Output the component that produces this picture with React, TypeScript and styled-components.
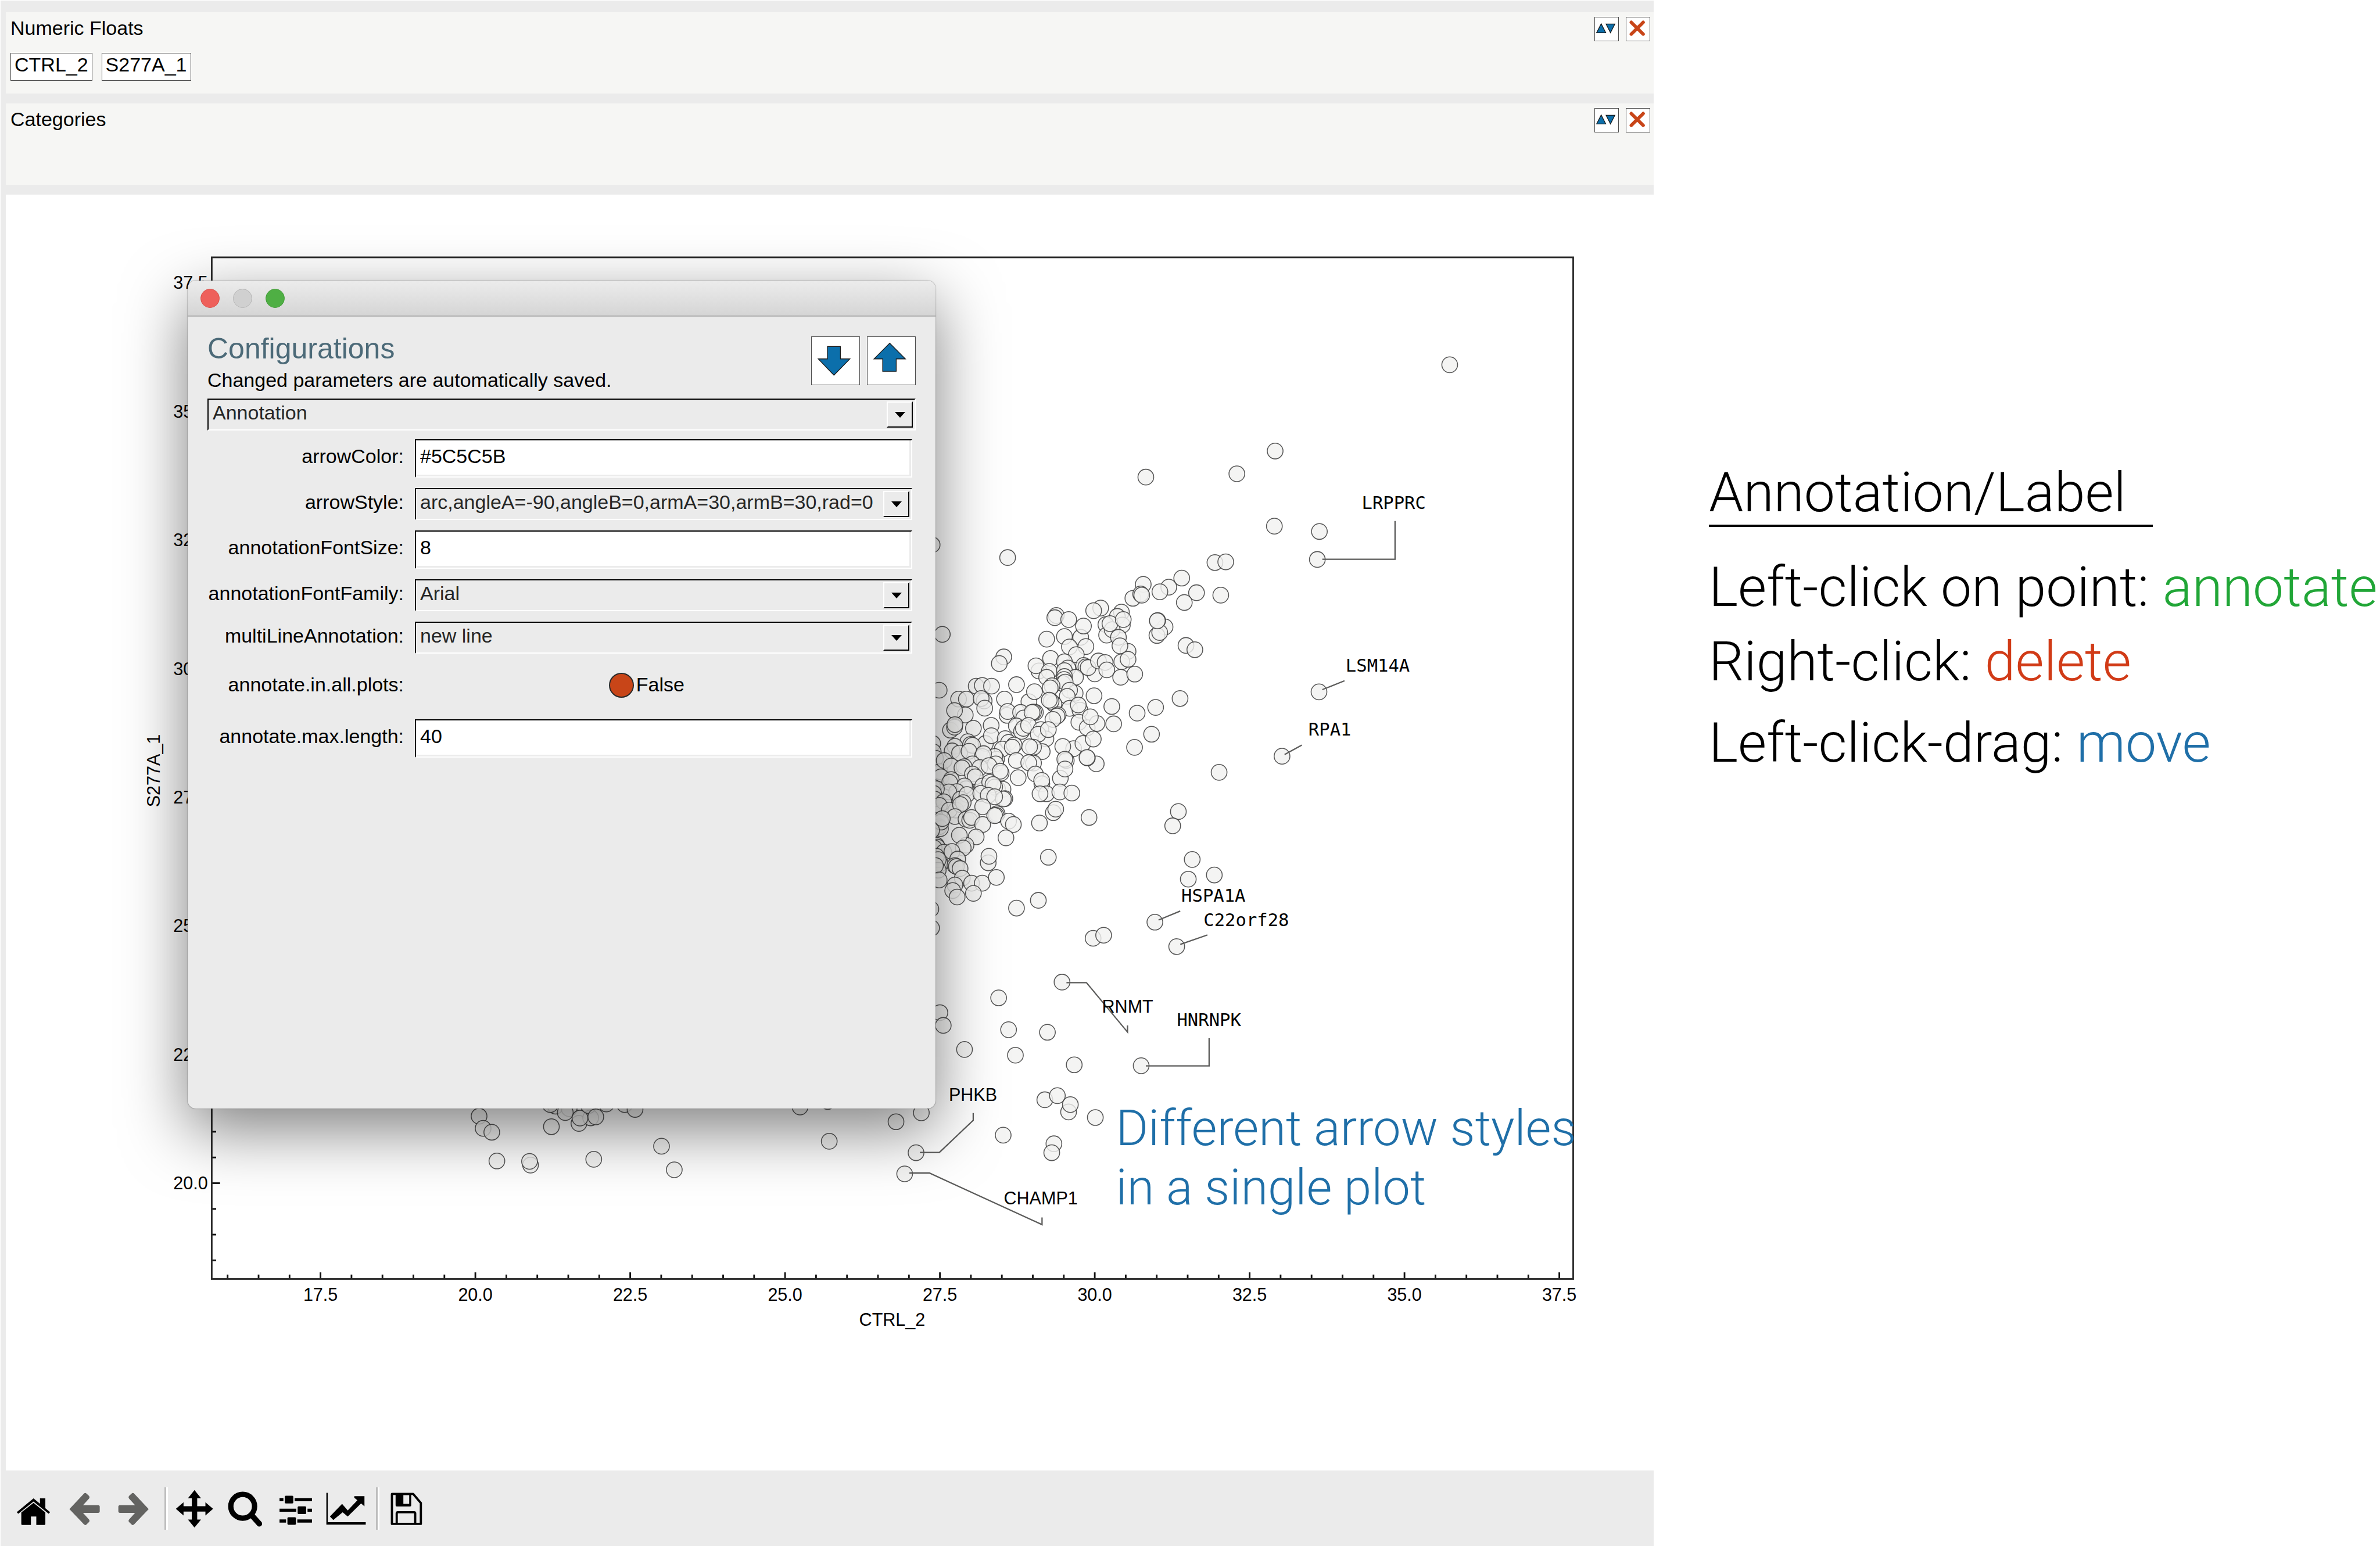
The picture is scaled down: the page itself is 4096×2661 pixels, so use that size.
import React, { useId, useState } from "react";
import styled, { createGlobalStyle } from "styled-components";

const SANS = '"Liberation Sans", Arial, sans-serif';
const MONO = '"DejaVu Sans Mono", monospace';
const LIGHT = 'Roboto, sans-serif';

const GlobalStyle = createGlobalStyle`
  *, *::before, *::after { box-sizing: border-box; }
  body { margin: 0; background: #fff; color: #000; font-family: ${SANS}; }
  button, input, select { font: inherit; color: inherit; margin: 0; padding: 0; border-radius: 0; }
`;

/* ---------- page ---------- */

const Page = styled.div`
  display: grid;
  grid-template-columns: minmax(0, 2846fr) minmax(0, 1250fr);
  min-height: 100vh;
  overflow: hidden;
`;

const Workspace = styled.main`
  display: flex;
  flex-direction: column;
  min-width: 0;
  background: #ebebeb;
  border: 0 solid #fff;
  border-width: 1px 0 0 1px;
  padding: 20px 0 0 9px;
`;

/* ---------- receiver boxes above the plot ---------- */

const DropBox = styled.section`
  background: #f6f6f4;
  min-height: 140px;
  margin-bottom: 17px;
  padding: 8px 6px 0 8px;
  font-size: 34px;
`;

const DropHeader = styled.header`
  display: flex;
  align-items: flex-start;
  gap: 12px;
`;

const DropTitle = styled.h2`
  flex: 1;
  margin: 0;
  font-size: 34px;
  font-weight: 400;
  line-height: 38px;
`;

const SmallButton = styled.button`
  display: flex;
  width: 42px;
  height: 42px;
  background: #fff;
  border: 1px solid #4d4d4d;
  svg { display: block; width: 100%; height: 100%; }
`;

const Chips = styled.div`
  display: flex;
  gap: 16px;
  margin-top: 20px;
`;

const Chip = styled.button`
  height: 48px;
  padding: 0 6px 8px;
  line-height: 38px;
  background: #fff;
  border: 1px solid #4d4d4d;
`;

/* ---------- plot ---------- */

const PlotArea = styled.div`
  position: relative;
  flex: 1;
  background: #fff;
`;

const Plot = styled.svg`
  display: block;
  width: 100%;
  height: auto;
`;

const AxisText = styled.text`
  font-family: ${SANS};
  font-size: 32px;
`;

const GeneText = styled.text<{ $mono?: boolean }>`
  font-family: ${(p) => (p.$mono ? MONO : SANS)};
  font-size: 32px;
`;

const NoteText = styled.text`
  font-family: ${LIGHT};
  font-weight: 300;
  font-size: 89px;
  fill: #1f6fa8;
`;

/* ---------- configuration window ---------- */

const Dialog = styled.div`
  position: absolute;
  left: 313px;
  top: 148px;
  width: 1287px;
  height: 1425px;
  background: #ebebeb;
  border-radius: 14px;
  box-shadow: 0 36px 110px rgba(0, 0, 0, 0.5), 0 0 2px rgba(0, 0, 0, 0.6);
  font-size: 34px;
`;

const TitleBar = styled.div`
  display: flex;
  align-items: center;
  gap: 23px;
  height: 62px;
  padding: 0 22px;
  border-radius: 14px 14px 0 0;
  background: linear-gradient(#ececec, #d5d5d5);
  border-bottom: 2px solid #b1b1b1;
`;

const Light = styled.button<{ $fill: string; $edge: string }>`
  width: 33px;
  height: 33px;
  && { border-radius: 50%; }
  background: ${(p) => p.$fill};
  border: 1px solid ${(p) => p.$edge};
`;

const DialogBody = styled.form`
  padding: 30px 34px 0;
`;

const DialogHead = styled.div`
  display: flex;
  gap: 12px;
  margin-bottom: 11px;
`;

const DialogTitles = styled.div`
  flex: 1;
`;

const DialogTitle = styled.h1`
  margin: 0 0 8px;
  font-size: 50px;
  line-height: 50px;
  font-weight: 400;
  color: #4c6a78;
`;

const DialogHint = styled.p`
  margin: 0;
  font-size: 34px;
  line-height: 42px;
`;

const ArrowButton = styled.button`
  width: 84px;
  height: 84px;
  margin-top: 4px;
  background: #fff;
  border: 1px solid #4d4d4d;
  svg { display: block; width: 100%; height: 100%; }
`;

const Fields = styled.div`
  display: grid;
  grid-template-columns: 338px 1fr;
  column-gap: 19px;
  row-gap: 18px;
  align-items: center;
  padding: 15px 6px 0 0;
`;

const FieldLabel = styled.label`
  text-align: right;
  padding-bottom: 8px;
  line-height: 40px;
  white-space: nowrap;
`;

const TextField = styled.input`
  width: 100%;
  height: 66px;
  && { padding: 0 8px 8px 7px; }
  background: #fff;
  border: 2px solid;
  border-color: #000 #fff #fff #000;
  box-shadow: inset -3px -3px 0 #ebebeb;
  outline: none;
`;

const SelectBox = styled.div`
  position: relative;
`;

const SelectField = styled.select`
  display: block;
  appearance: none;
  width: 100%;
  height: 55px;
  && { padding: 0 50px 8px 7px; color: #262626; }
  background: #ebebeb;
  border: 2px solid;
  border-color: #000 #fff #fff #000;
  outline: none;
`;

const SelectArrow = styled.span`
  position: absolute;
  top: 5px;
  right: 5px;
  width: 45px;
  height: 45px;
  display: grid;
  place-items: center;
  pointer-events: none;
  border: 2px solid;
  border-color: #fff #000 #000 #fff;
  &::after {
    content: "";
    border: 9px solid transparent;
    border-top: 10px solid #000;
    border-bottom: 0;
  }
`;

const ToggleRow = styled.div`
  display: flex;
  align-items: center;
  gap: 4px;
  height: 77px;
  padding: 0 0 4px 39%;
`;

const Toggle = styled.input`
  appearance: none;
  width: 43px;
  height: 43px;
  && { border-radius: 50%; }
  border: 2px solid #2a2a2a;
  background: #c84518;
  &:checked { background: #4faf44; }
`;

const ToggleText = styled.span`
  padding-bottom: 4px;
  line-height: 40px;
`;

/* ---------- toolbar ---------- */

const Toolbar = styled.div`
  display: flex;
  align-items: center;
  height: 130px;
  padding-left: 4px;
`;

const ToolButton = styled.button`
  width: 87px;
  height: 72px;
  background: none;
  border: 0;
  svg { display: block; width: 100%; height: 100%; }
`;

const Separator = styled.span`
  width: 6px;
  height: 73px;
  margin: 0 2px 0 8px;
  border-left: 3px solid #bdbdbd;
  border-right: 3px solid #fff;
`;

/* ---------- help text ---------- */

const Help = styled.aside`
  min-width: 0;
  padding: 792px 0 0 95px;
  font-family: ${LIGHT};
  font-weight: 300;
  font-size: 95px;
  white-space: nowrap;
`;

const HelpTitle = styled.h2`
  width: 764px;
  margin: 0 0 40px;
  font-size: 95px;
  font-weight: 300;
  line-height: 111px;
  border-bottom: 4px solid #000;
`;

const HelpGroup = styled.div`
  margin-bottom: 12px;
`;

const HelpLine = styled.p`
  margin: 0;
  line-height: 128px;
`;

const Action = styled.span<{ $color: string }>`
  color: ${(p) => p.$color};
`;

/* ---------- data ---------- */

type Pair = [number, number];
interface Batch { x: number; y: number; step: number; at: Pair[] }

const BATCHES: Batch[] = [
  { x: 0, y: 0, step: 1, at: [
    [2611.5,657.6],[2297,813],[2064,860],[2228,854],[2295.6,948.4],[2376.7,958],[2373,1008.4],[1815,1005],[1679,982],
    [2188.5,1014],[2208,1012.7],[2199,1072.7],[2376,1247],[2309.4,1363],[2196,1392],[2122.6,1462.7],[2112.4,1488.4],
    [2147.6,1549],[2187.4,1577],[2140.5,1584.5],[2080.3,1662],[2119.6,1706],[1969,1691],[1988,1685.5],[1678,1672.5],
    [1913,1770],[1798.8,1798.4],[1693,1825],[1699,1848],[1816.7,1855.8],[1886.7,1860.4],[1737.3,1891.4],[1829,1901.7],
    [1935,1919],[2055.6,1920.7],[1882,1982],[1904.6,1974.6],[1924.8,2004],[1928,1990.7],[1973,2014],[1807,2045.8],
    [1898.4,2061.3],[1894.5,2077.4],[1659.5,2005.6],[1650,2077.4],
    [862.7,2011.6],[870,2033.5],[885.6,2040.5],[993,2030.5],[1000.4,1993.5],[991,1990.6],[1025,1998],[1018,2005],
    [1042.6,2024.6],[1063.8,2014.6],[1044.5,2015],[1060,1992.4],[1073,2012.8],[1092,1989.5],[1125,1990.6],[1143.7,1999.4],
    [1441,1995],[1490.8,1985],[1613.9,2021.6],[1493.6,2056.8],[894.8,2092.3],[955.4,2099.7],[953.6,2093],[1069.3,2089.3],
    [1191.4,2065.7],[1214.4,2108.2],[1629.5,2115.6],
  ] },
  { x: 1680, y: 1120, step: 1 / 3, at: [
    [52,70],[35,372],[384,192],[360,228],[453,342],[235,350],[268,346],[318,350],[388,420],[140,420],[182,420],[278,430],
    [262,417],[176,506],[118,482],[281,469],[402,508],[405,487],[96,588],[118,572],[120,558],[220,578],[316,562],[190,650],
    [285,660],[317,618],[520,434],[550,380],[616,96],[712,82],[800,86],[739,138],[828,136],[776,180],[637,200],[574,268],
    [558,240],[712,218],[630,270],[616,302],[730,252],[712,266],[816,238],[828,246],[772,302],[712,298],[710,314],[704,336],
    [716,328],[876,284],[840,250],[645,348],[635,360],[770,388],[740,372],[727,405],[872,402],[655,446],[640,432],[630,426],
    [740,470],[796,480],[787,452],[678,505],[672,512],[650,530],[475,492],[492,522],[555,492],[545,490],[537,492],[452,565],
    [480,595],[490,578],[518,562],[585,585],[612,635],[570,610],[625,585],[790,545],[835,575],[888,552],[852,516],[762,688],
    [812,660],[868,636],[703,676],[722,752],[714,745],[690,848],[715,798],[884,770],[836,738],[834,736],[592,704],[545,680],
    [524,678],[392,634],[410,654],[376,690],[440,668],[430,680],[452,752],[462,845],[545,766],[519,764],[555,825],[590,878],
    [589,860],[615,932],[580,932],[687,922],[752,928],[652,1034],[665,1015],[577,1090],[845,1060],[625,1275],[571,1508],
    [453,1550],[0,660],[3,705],[15,740],[120,675],[105,700],[205,665],[215,670],[145,712],[196,702],[345,745],[335,730],
    [268,730],[275,715],[40,812],[62,752],[100,782],[215,770],[170,785],[158,792],[255,790],[340,770],[304,780],[215,825],
    [230,840],[370,820],[365,810],[45,840],[100,855],[92,870],[180,905],[172,890],[270,890],[350,905],[380,908],[308,870],
    [335,895],[326,882],[130,920],[87,922],[150,960],[185,936],[260,930],[300,940],[390,958],[382,960],[335,948],[0,895],
    [20,905],[5,930],[10,960],[60,975],[36,995],[125,1020],[90,1020],[165,980],[150,990],[270,1002],[120,1055],[35,1110],
    [42,1120],[45,1085],[52,1066],[180,1070],[200,1075],[210,1060],[270,1098],[348,1040],[343,1048],[335,1050],[410,1080],
    [436,1098],[396,1170],[-6,1130],[235,1165],[180,1210],[144,1156],[165,1225],[20,1210],[25,1220],[8,1225],[60,1248],
    [104,1244],[40,1310],[20,1270],[30,1288],[135,1285],[120,1320],[128,1325],[148,1336],[30,1345],[15,1320],[35,1398],
    [160,1388],[120,1425],[210,1415],[268,1415],[344,1384],[300,1305],[304,1270],[220,1470],[108,1455],[132,1490],[-10,1555],
  ] },
  { x: 1840, y: 960, step: 1 / 3, at: [
    [188,448],[180,460],[255,470],[335,505],[428,408],[390,422],[866,246],[796,295],[748,320],[658,280],[602,355],[644,332],
    [650,338],[946,325],[880,378],[540,430],[518,453],[545,500],[456,497],[460,554],[490,525],[478,492],[550,470],[524,566],
    [576,642],[532,612],[542,698],[576,685],[776,510],[732,556],[747,540],[736,475],[734,477],[889,610],[937,633],[416,694],
    [452,702],[461,742],[536,782],[612,765],[488,940],[498,1034],[625,976],[725,945],[857,897],[703,1090],[611,1161],
  ] },
];

const GENES: { name: string; x: number; y: number; mono?: boolean; line: string }[] = [
  { name: "LRPPRC", x: 2453, y: 917, mono: true, line: "2382,1008 2513,1008 2513,939" },
  { name: "LSM14A", x: 2424, y: 1210, mono: true, line: "2382,1243 2422,1227" },
  { name: "RPA1", x: 2357, y: 1326, mono: true, line: "2314,1360 2345,1343" },
  { name: "HSPA1A", x: 2128, y: 1625, mono: true, line: "2087,1658 2126,1642" },
  { name: "C22orf28", x: 2168, y: 1669, mono: true, line: "2126,1702 2175,1685" },
  { name: "RNMT", x: 1985, y: 1825, line: "1921,1771 1957,1771 2031,1860 2031,1848" },
  { name: "HNRNPK", x: 2120, y: 1849, mono: true, line: "2064,1921 2178,1921 2178,1871" },
  { name: "PHKB", x: 1709, y: 1984, line: "1657,2077 1692,2077 1753,2019 1753,2006" },
  { name: "CHAMP1", x: 1808, y: 2171, line: "1638,2114 1674,2114 1877,2207 1877,2194" },
];

const AXIS = { left: 381, right: 2834, top: 464, bottom: 2305 };
const xAt = (v: number) => 577 + (v - 17.5) * 111.6;
const yAt = (v: number) => 2132.3 - (v - 20) * 92.7;
const range = (from: number, to: number, step: number) =>
  Array.from({ length: Math.round((to - from) / step) + 1 }, (_, i) => from + i * step);

function Ticks() {
  return (
    <g stroke="#111" strokeWidth={3}>
      {range(16, 37.5, 0.5).map((v) => (
        <path key={`x${v}`} d={`M${xAt(v)} ${AXIS.bottom}v${v % 2.5 === 0 ? -12 : -8}`} />
      ))}
      {range(18.5, 37.5, 0.5).map((v) => (
        <path key={`y${v}`} d={`M${AXIS.left} ${yAt(v)}h${v % 2.5 === 0 ? 15 : 8}`} />
      ))}
    </g>
  );
}

function ScatterPlot() {
  const labels = range(17.5, 37.5, 2.5);
  return (
    <Plot viewBox="10 351 2969 2299" role="img" aria-label="Scatter plot of S277A_1 against CTRL_2">
      <Ticks />
      {labels.map((v) => (
        <AxisText key={v} x={xAt(v)} y={2344} textAnchor="middle">{v.toFixed(1)}</AxisText>
      ))}
      {labels.slice(1).map((v) => (
        <AxisText key={v} x={374} y={yAt(v) + 11} textAnchor="end">{v.toFixed(1)}</AxisText>
      ))}
      <AxisText x={1607} y={2389} textAnchor="middle">CTRL_2</AxisText>
      <AxisText transform="translate(287 1389) rotate(-90)" textAnchor="middle">S277A_1</AxisText>
      <g fill="#f1f1f0" fillOpacity={0.8} stroke="#3a3a3a" strokeOpacity={0.85} strokeWidth={1.6}>
        {BATCHES.map((b, i) =>
          b.at.map(([px, py], j) => (
            <circle key={`${i}-${j}`} cx={b.x + px * b.step} cy={b.y + py * b.step} r={14.2} />
          ))
        )}
      </g>
      {GENES.map((g) => (
        <g key={g.name}>
          <polyline points={g.line} fill="none" stroke="#5c5c5b" strokeWidth={2.4} />
          <GeneText $mono={g.mono} x={g.x} y={g.y}>{g.name}</GeneText>
        </g>
      ))}
      <rect
        x={AXIS.left} y={AXIS.top}
        width={AXIS.right - AXIS.left} height={AXIS.bottom - AXIS.top}
        fill="none" stroke="#2b2b2b" strokeWidth={3}
      />
      <NoteText x={2010} y={2064}>Different arrow styles</NoteText>
      <NoteText x={2010} y={2171}>in a single plot</NoteText>
    </Plot>
  );
}

/* ---------- parts ---------- */

function ReceiverBox({ title, items }: { title: string; items: string[] }) {
  return (
    <DropBox>
      <DropHeader>
        <DropTitle>{title}</DropTitle>
        <SmallButton type="button" aria-label={`Sort ${title}`}>
          <svg viewBox="0 0 44 44" fill="#0c6fab" stroke="#1a1a1a" strokeWidth="1.4">
            <path d="M11.7 12L20.4 29H3z" />
            <path d="M21 12.4H37.6L29.3 29z" />
          </svg>
        </SmallButton>
        <SmallButton type="button" aria-label={`Clear ${title}`}>
          <svg viewBox="0 0 44 44" stroke="#c84518" strokeWidth="6.4" strokeLinecap="round">
            <path d="M9.3 9.3L31.8 31.6M31.8 9.3L9.3 31.6" />
          </svg>
        </SmallButton>
      </DropHeader>
      {items.length > 0 && (
        <Chips>
          {items.map((item) => <Chip key={item} type="button">{item}</Chip>)}
        </Chips>
      )}
    </DropBox>
  );
}

function Dropdown({ id, label, options }: { id?: string; label?: string; options: string[] }) {
  return (
    <SelectBox>
      <SelectField id={id} aria-label={label} defaultValue={options[0]}>
        {options.map((o) => <option key={o}>{o}</option>)}
      </SelectField>
      <SelectArrow aria-hidden="true" />
    </SelectBox>
  );
}

interface Param { name: string; kind: "text" | "select" | "toggle"; value: string }

const PARAMS: Param[] = [
  { name: "arrowColor", kind: "text", value: "#5C5C5B" },
  { name: "arrowStyle", kind: "select", value: "arc,angleA=-90,angleB=0,armA=30,armB=30,rad=0" },
  { name: "annotationFontSize", kind: "text", value: "8" },
  { name: "annotationFontFamily", kind: "select", value: "Arial" },
  { name: "multiLineAnnotation", kind: "select", value: "new line" },
  { name: "annotate.in.all.plots", kind: "toggle", value: "False" },
  { name: "annotate.max.length", kind: "text", value: "40" },
];

function ToggleField({ id }: { id: string }) {
  const [on, setOn] = useState(false);
  return (
    <ToggleRow>
      <Toggle id={id} type="checkbox" checked={on} onChange={(e) => setOn(e.target.checked)} />
      <ToggleText>{on ? "True" : "False"}</ToggleText>
    </ToggleRow>
  );
}

function ParamField({ name, kind, value }: Param) {
  const id = useId();
  return (
    <>
      <FieldLabel htmlFor={id}>{name}:</FieldLabel>
      {kind === "text" && <TextField id={id} type="text" defaultValue={value} />}
      {kind === "select" && <Dropdown id={id} options={[value]} />}
      {kind === "toggle" && <ToggleField id={id} />}
    </>
  );
}

function ConfigDialog() {
  return (
    <Dialog role="dialog" aria-label="Configurations">
      <TitleBar>
        <Light type="button" aria-label="Close" $fill="#ee605b" $edge="#d9534d" />
        <Light type="button" aria-label="Minimize" $fill="#d0d0d0" $edge="#b4b4b4" />
        <Light type="button" aria-label="Zoom" $fill="#4faf44" $edge="#459c3b" />
      </TitleBar>
      <DialogBody>
        <DialogHead>
          <DialogTitles>
            <DialogTitle>Configurations</DialogTitle>
            <DialogHint>Changed parameters are automatically saved.</DialogHint>
          </DialogTitles>
          <ArrowButton type="button" aria-label="Load">
            <svg viewBox="0 0 88 88" fill="#0c6fab" stroke="#1a1a1a" strokeWidth="1.4">
              <path d="M29 17.5H53V40.5H70.5L41 70.5 12 40.5H29z" />
            </svg>
          </ArrowButton>
          <ArrowButton type="button" aria-label="Save">
            <svg viewBox="0 0 88 88" fill="#0c6fab" stroke="#1a1a1a" strokeWidth="1.4">
              <path d="M28 63.5H53V40.5H70L41 11.5 12 40.5H28z" />
            </svg>
          </ArrowButton>
        </DialogHead>
        <Dropdown label="Category" options={["Annotation"]} />
        <Fields>
          {PARAMS.map((p) => <ParamField key={p.name} {...p} />)}
        </Fields>
      </DialogBody>
    </Dialog>
  );
}

const ARROW = "M19.3 39L45.5 11.2Q47.8 9 50 11L54.3 15Q56.6 17.5 54.5 20.2L43.8 32H71Q73.9 32 73.9 35V43Q73.9 45.8 71 45.8H43.8L54.5 57.6Q56.6 60.3 54.3 62.6L50 66.8Q47.8 68.8 45.5 66.6z";

const ICONS: Record<string, React.ReactNode> = {
  Home: (
    <>
      <path d="M45.7 19.7L57.3 29.5V19.7H67V37.5L75.5 44.5 73 47.5 45.7 25.5 18.2 47.5 15.5 44.5z" />
      <path d="M45.7 27.8L67 45V66Q67 67.7 65.3 67.7H50.7V52.4H41V67.7H25.4Q23.7 67.7 23.7 66V45z" />
    </>
  ),
  Back: <path d={ARROW} fill="#636361" />,
  Forward: <path d={ARROW} fill="#636361" transform="translate(90.3 0) scale(-1 1)" />,
  Pan: (
    <>
      <path d="M40.9 17H50.6V60H40.9z M24 33.8H67V43.5H24z" />
      <path d="M45.7 4.7L57.5 19.4H34z M45.7 72.4L34 57.8H57.5z M12.2 38.6L26 26.8V50.5z M79.2 38.6L65.4 26.8V50.5z" />
    </>
  ),
  Zoom: (
    <g fill="none" stroke="#000">
      <circle cx="41.5" cy="34" r="21.4" strokeWidth="9.6" />
      <path d="M58.5 51L71.5 65.5" strokeWidth="10" strokeLinecap="round" />
    </g>
  ),
  Subplots: (
    <>
      <path d="M16.8 19.3H75.2V24.9H16.8z M16.8 38.3H75.2V43.9H16.8z M16.8 57.7H75.2V63.3H16.8z" />
      <g stroke="#ebebeb" strokeWidth="2.4">
        <rect x="25" y="13.9" width="17.8" height="16.2" rx="3" />
        <rect x="48.2" y="33" width="17.8" height="16.2" rx="3" />
        <rect x="29.8" y="52.4" width="17.8" height="16.2" rx="3" />
      </g>
    </>
  ),
  Axes: (
    <>
      <path d="M10.1 9.7H12.6V62.7H81V67H10.1z" />
      <path d="M16.5 52.4L38.4 29.7 48.6 41.4 66 23 60.4 18.7V15.7H78.7V34L72.6 29 48.6 52.4 39.4 44.7 22.6 58.7z" />
    </>
  ),
  Save: (
    <>
      <path d="M20.4 11.7H58.5L72.5 28V65.7H20.4z" fill="none" stroke="#000" strokeWidth="4" strokeLinejoin="round" />
      <path d="M27 12H55.1V32.4Q55.1 34.4 53.1 34.4H29Q27 34.4 27 32.4z M41 13.7V29.7H51.5V13.7z" fillRule="evenodd" />
      <path d="M29 65V46.7Q29 44.7 31 44.7H60.3Q62.3 44.7 62.3 46.7V65" fill="none" stroke="#000" strokeWidth="4" />
    </>
  ),
};

function Tool({ name }: { name: string }) {
  return (
    <ToolButton type="button" aria-label={name}>
      <svg viewBox="0 0 91 75">{ICONS[name]}</svg>
    </ToolButton>
  );
}

export default function App() {
  return (
    <>
      <GlobalStyle />
      <Page>
        <Workspace>
          <ReceiverBox title="Numeric Floats" items={["CTRL_2", "S277A_1"]} />
          <ReceiverBox title="Categories" items={[]} />
          <PlotArea>
            <ScatterPlot />
            <ConfigDialog />
          </PlotArea>
          <Toolbar role="toolbar" aria-label="Plot tools">
            {["Home", "Back", "Forward"].map((n) => <Tool key={n} name={n} />)}
            <Separator />
            {["Pan", "Zoom", "Subplots", "Axes"].map((n) => <Tool key={n} name={n} />)}
            <Separator />
            <Tool name="Save" />
          </Toolbar>
        </Workspace>
        <Help>
          <HelpTitle>Annotation/Label</HelpTitle>
          <HelpGroup>
            <HelpLine>Left-click on point: <Action $color="#21a637">annotate</Action></HelpLine>
            <HelpLine>Right-click: <Action $color="#d13b17">delete</Action></HelpLine>
          </HelpGroup>
          <HelpLine>Left-click-drag: <Action $color="#1f6fa8">move</Action></HelpLine>
        </Help>
      </Page>
    </>
  );
}
